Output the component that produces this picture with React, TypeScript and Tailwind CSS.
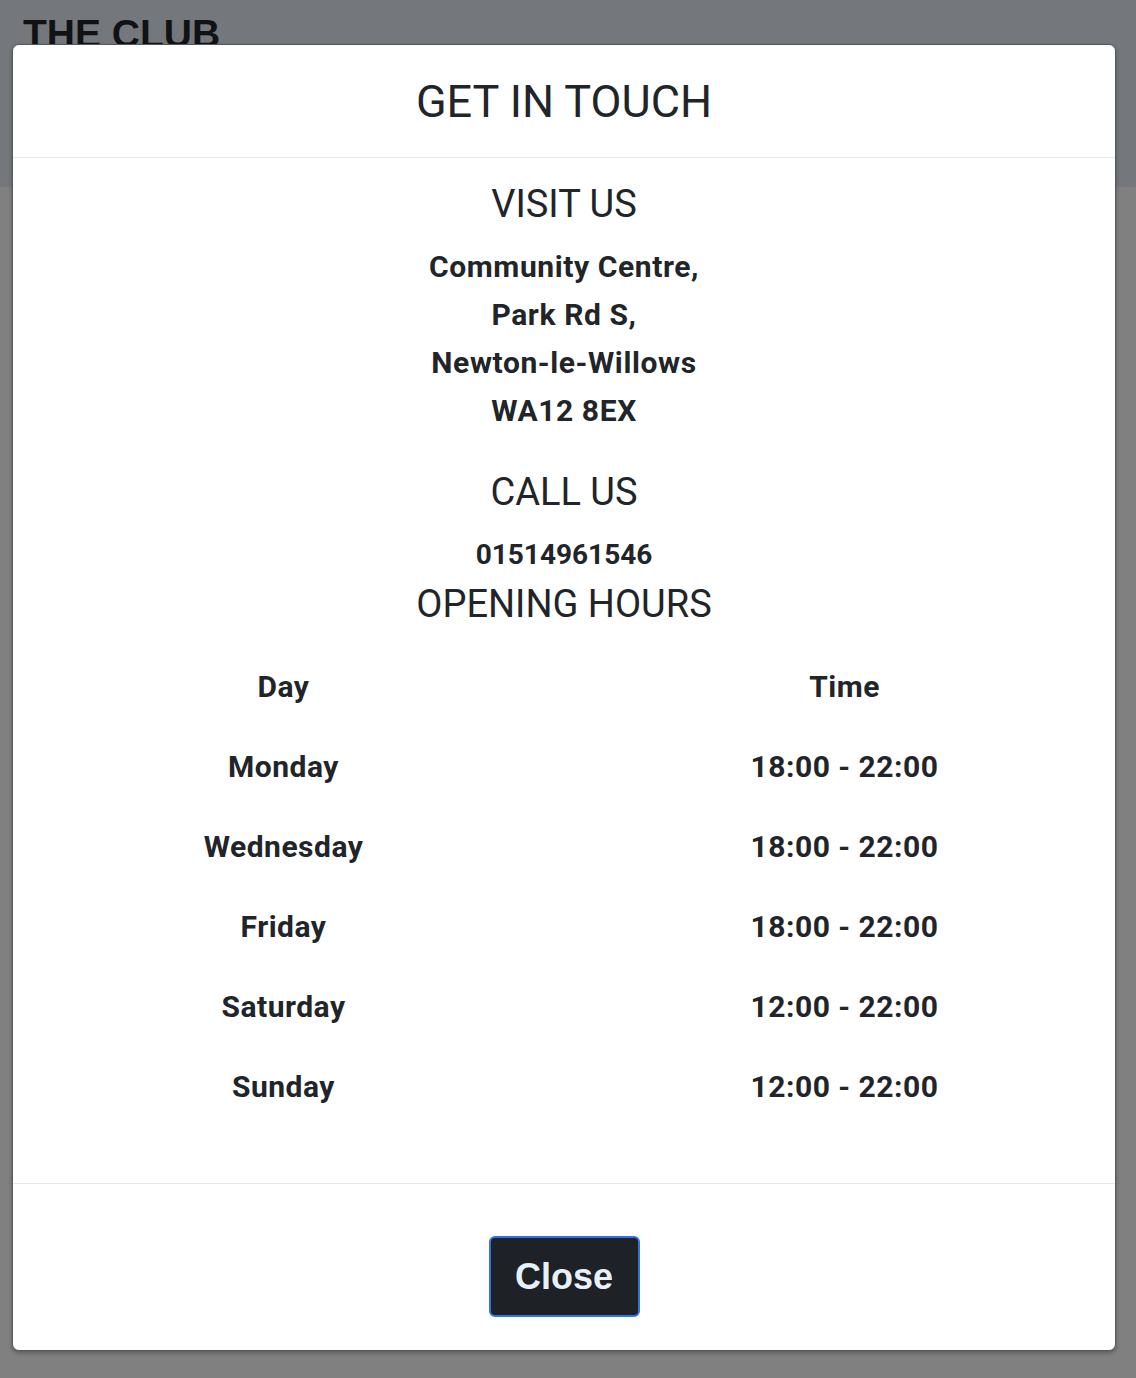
import React from "react";

const hours = [
  { day: "Monday", time: "18:00 - 22:00" },
  { day: "Wednesday", time: "18:00 - 22:00" },
  { day: "Friday", time: "18:00 - 22:00" },
  { day: "Saturday", time: "12:00 - 22:00" },
  { day: "Sunday", time: "12:00 - 22:00" },
];

const App = () => {
  return (
    <div className="relative h-[1378px] w-full overflow-hidden font-['Roboto',sans-serif] text-[#212529]">
      {/* page behind the backdrop */}
      <div className="flex h-full flex-col">
        <div className="h-[187px] bg-[#74777c] px-[23px] pt-[10px]">
          <h1 className="font-['Liberation_Sans',Arial,sans-serif] text-[39px] font-bold leading-[48px] text-[#111214]">
            THE CLUB
          </h1>
        </div>
        <div className="flex-1 bg-[#808080]" />
      </div>

      {/* modal */}
      <div className="absolute left-[12px] top-[44px] flex h-[1307px] w-[1104px] flex-col rounded-[7px] border border-[#55585c] bg-white shadow-[0_2px_4px_rgba(0,0,0,0.3)]">
        <div className="flex h-[113px] items-center justify-center border-b border-[#e6e6ec]">
          <h2 className="text-[45px] font-normal leading-none">GET IN TOUCH</h2>
        </div>

        <div className="flex flex-1 flex-col items-center border-b border-[#e6e6ec] pt-[22px]">
          <h3 className="text-[38px] leading-[48px]">VISIT US</h3>
          <div className="mt-[15px] text-center text-[30px] font-bold leading-[48px] tracking-[0.6px]">
            <p>Community Centre,</p>
            <p>Park Rd S,</p>
            <p>Newton-le-Willows</p>
            <p>WA12 8EX</p>
          </div>
          <h3 className="mt-[33px] text-[38px] leading-[48px]">CALL US</h3>
          <p className="mt-[19px] text-[28px] font-bold leading-[40px]">01514961546</p>
          <h3 className="mt-[5px] text-[38px] leading-[48px]">OPENING HOURS</h3>

          <div className="mt-[18px] grid w-full grid-cols-2 gap-x-5 text-center text-[30px] font-bold tracking-[0.5px]">
            <div className="flex h-[80px] items-center justify-center">Day</div>
            <div className="flex h-[80px] items-center justify-center">Time</div>
            {hours.map((h) => (
              <React.Fragment key={h.day}>
                <div className="flex h-[80px] items-center justify-center">{h.day}</div>
                <div className="flex h-[80px] items-center justify-center">{h.time}</div>
              </React.Fragment>
            ))}
          </div>
        </div>

        <div className="flex h-[166px] justify-center pt-[52px]">
          <button className="h-[81px] w-[151px] rounded-[6px] border-2 border-[#2f74e6] bg-[#1e2125] font-['Liberation_Sans',Arial,sans-serif] text-[36px] font-bold text-[#e8f0fa]">
            Close
          </button>
        </div>
      </div>
    </div>
  );
};

export default App;
